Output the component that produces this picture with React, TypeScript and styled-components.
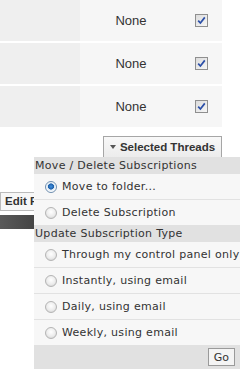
import styled, { createGlobalStyle } from 'styled-components';

const GlobalStyle = createGlobalStyle`
  html {
    overflow: hidden;
  }
  html, body {
    margin: 0;
    padding: 0;
    background: #ffffff;
  }
  body {
    min-height: 100vh;
    font-family: 'Liberation Sans', Arial, sans-serif;
    color: #333;
  }
`;

interface Thread {
  id: number;
  notify: string;
  checked: boolean;
}

const threads: Thread[] = [
  { id: 1, notify: 'None', checked: true },
  { id: 2, notify: 'None', checked: true },
  { id: 3, notify: 'None', checked: true },
];

const moveOptions = [
  { label: 'Move to folder...', selected: true },
  { label: 'Delete Subscription', selected: false },
];

const typeOptions = [
  'Through my control panel only',
  'Instantly, using email',
  'Daily, using email',
  'Weekly, using email',
];

function CheckMark() {
  return (
    <svg width='9' height='9' viewBox='0 0 9 9'>
      <path d='M1.2 4.6 L3.4 7 L7.8 1.4' fill='none' stroke='#2b4fa8' strokeWidth='1.7' />
    </svg>
  );
}

function App() {
  return (
    <>
      <GlobalStyle />
      <Page>
        <Table>
          {threads.map((t) => (
            <Row key={t.id}>
              <TitleCell />
              <NotifyCell>{t.notify}</NotifyCell>
              <CheckCell>
                <CheckBox>{t.checked && <CheckMark />}</CheckBox>
              </CheckCell>
            </Row>
          ))}
        </Table>

        <Toolbar>
          <MenuButton>
            <Caret />
            Selected Threads
          </MenuButton>
        </Toolbar>

        <EditRow>
          <EditButton>Edit Folders</EditButton>
        </EditRow>
        <DarkBar />

        {/* dropdown opened under "Selected Threads" */}
        <Popup>
          <GroupHeader>Move / Delete Subscriptions</GroupHeader>
          {moveOptions.map((o, i) => (
            <Option key={o.label} last={i === moveOptions.length - 1}>
              <Radio selected={o.selected} />
              {o.label}
            </Option>
          ))}
          <GroupHeader>Update Subscription Type</GroupHeader>
          {typeOptions.map((label, i) => (
            <Option key={label} last={i === typeOptions.length - 1}>
              <Radio selected={false} />
              {label}
            </Option>
          ))}
          <Footer>
            <GoButton>Go</GoButton>
          </Footer>
        </Popup>
      </Page>
    </>
  );
}

export default App;

const Page = styled.div`
  position: relative;
  width: 222px;
`;

const Table = styled.div`
  display: flex;
  flex-direction: column;
  gap: 2px;
`;

const Row = styled.div`
  display: grid;
  grid-template-columns: 80px 102px 40px;
  height: 41px;
`;

const TitleCell = styled.div`
  background: #efefef;
`;

const NotifyCell = styled.div`
  background: #f6f6f6;
  display: flex;
  align-items: center;
  justify-content: center;
  font-size: 13px;
  color: #333;
`;

const CheckCell = styled.div`
  background: #f6f6f6;
  display: flex;
  align-items: center;
  justify-content: center;
  padding-right: 1px;
`;

const CheckBox = styled.span`
  width: 11px;
  height: 11px;
  border: 1px solid #8f8f8f;
  background: linear-gradient(135deg, #dcdcdc 0%, #f6f6f6 100%);
  display: flex;
  align-items: center;
  justify-content: center;
`;

const Toolbar = styled.div`
  display: flex;
  justify-content: flex-end;
  margin-top: 9px;
`;

const MenuButton = styled.div`
  height: 20px;
  width: 117px;
  box-sizing: content-box;
  border: 1px solid #a6a6a6;
  background: linear-gradient(#f8f8f8, #ececec);
  display: flex;
  align-items: center;
  justify-content: center;
  gap: 4px;
  font-size: 11.5px;
  font-weight: bold;
  color: #333;
`;

const Caret = styled.span`
  width: 0;
  height: 0;
  border-left: 3.5px solid transparent;
  border-right: 3.5px solid transparent;
  border-top: 4px solid #555;
`;

const EditRow = styled.div`
  margin-top: 33px;
`;

const EditButton = styled.div`
  display: inline-flex;
  align-items: center;
  height: 17px;
  padding: 0 4px;
  border: 1px solid #bbb;
  background: #f7f7f7;
  font-size: 11.5px;
  font-weight: bold;
  color: #333;
`;

const DarkBar = styled.div`
  margin-top: 4px;
  height: 14px;
  width: 60px;
  background: linear-gradient(90deg, #5a5a5a, #353535);
`;

const Popup = styled.div`
  position: absolute;
  top: 157px;
  left: 34px;
  width: 206px;
  background: #f7f7f7;
  font-family: 'DejaVu Sans', Verdana, sans-serif;
  font-size: 11px;
  letter-spacing: 0.3px;
  color: #333;
  white-space: nowrap;
`;

const GroupHeader = styled.div`
  height: 17px;
  line-height: 17px;
  padding-left: 1px;
  background: #e1e1e1;
`;

const Option = styled.div<{ last: boolean }>`
  height: 25px;
  display: flex;
  align-items: center;
  gap: 5px;
  padding-left: 11px;
  border-bottom: ${(p) => (p.last ? 'none' : '1px solid #e2e2e2')};
`;

const Radio = styled.span<{ selected: boolean }>`
  width: 10px;
  height: 10px;
  border-radius: 50%;
  border: 1px solid ${(p) => (p.selected ? '#6f8fb0' : '#b4b4b4')};
  background: ${(p) =>
    p.selected
      ? 'radial-gradient(circle at 50% 45%, #3f8fe0 0%, #1d5fa8 38%, #d8e6f2 44%, #ffffff 70%, #d0d0d0 100%)'
      : 'radial-gradient(circle at 50% 40%, #ffffff 0%, #ececec 55%, #c8c8c8 100%)'};
  flex-shrink: 0;
`;

const Footer = styled.div`
  height: 24px;
  background: #e1e1e1;
  display: flex;
  align-items: center;
  justify-content: flex-end;
  padding-right: 5px;
`;

const GoButton = styled.div`
  height: 16px;
  padding: 0 5px;
  border: 1px solid #9a9a9a;
  background: #f4f4f4;
  display: flex;
  align-items: center;
  font-family: 'DejaVu Sans', Verdana, sans-serif;
  font-size: 11px;
  letter-spacing: 0;
  color: #333;
`;
